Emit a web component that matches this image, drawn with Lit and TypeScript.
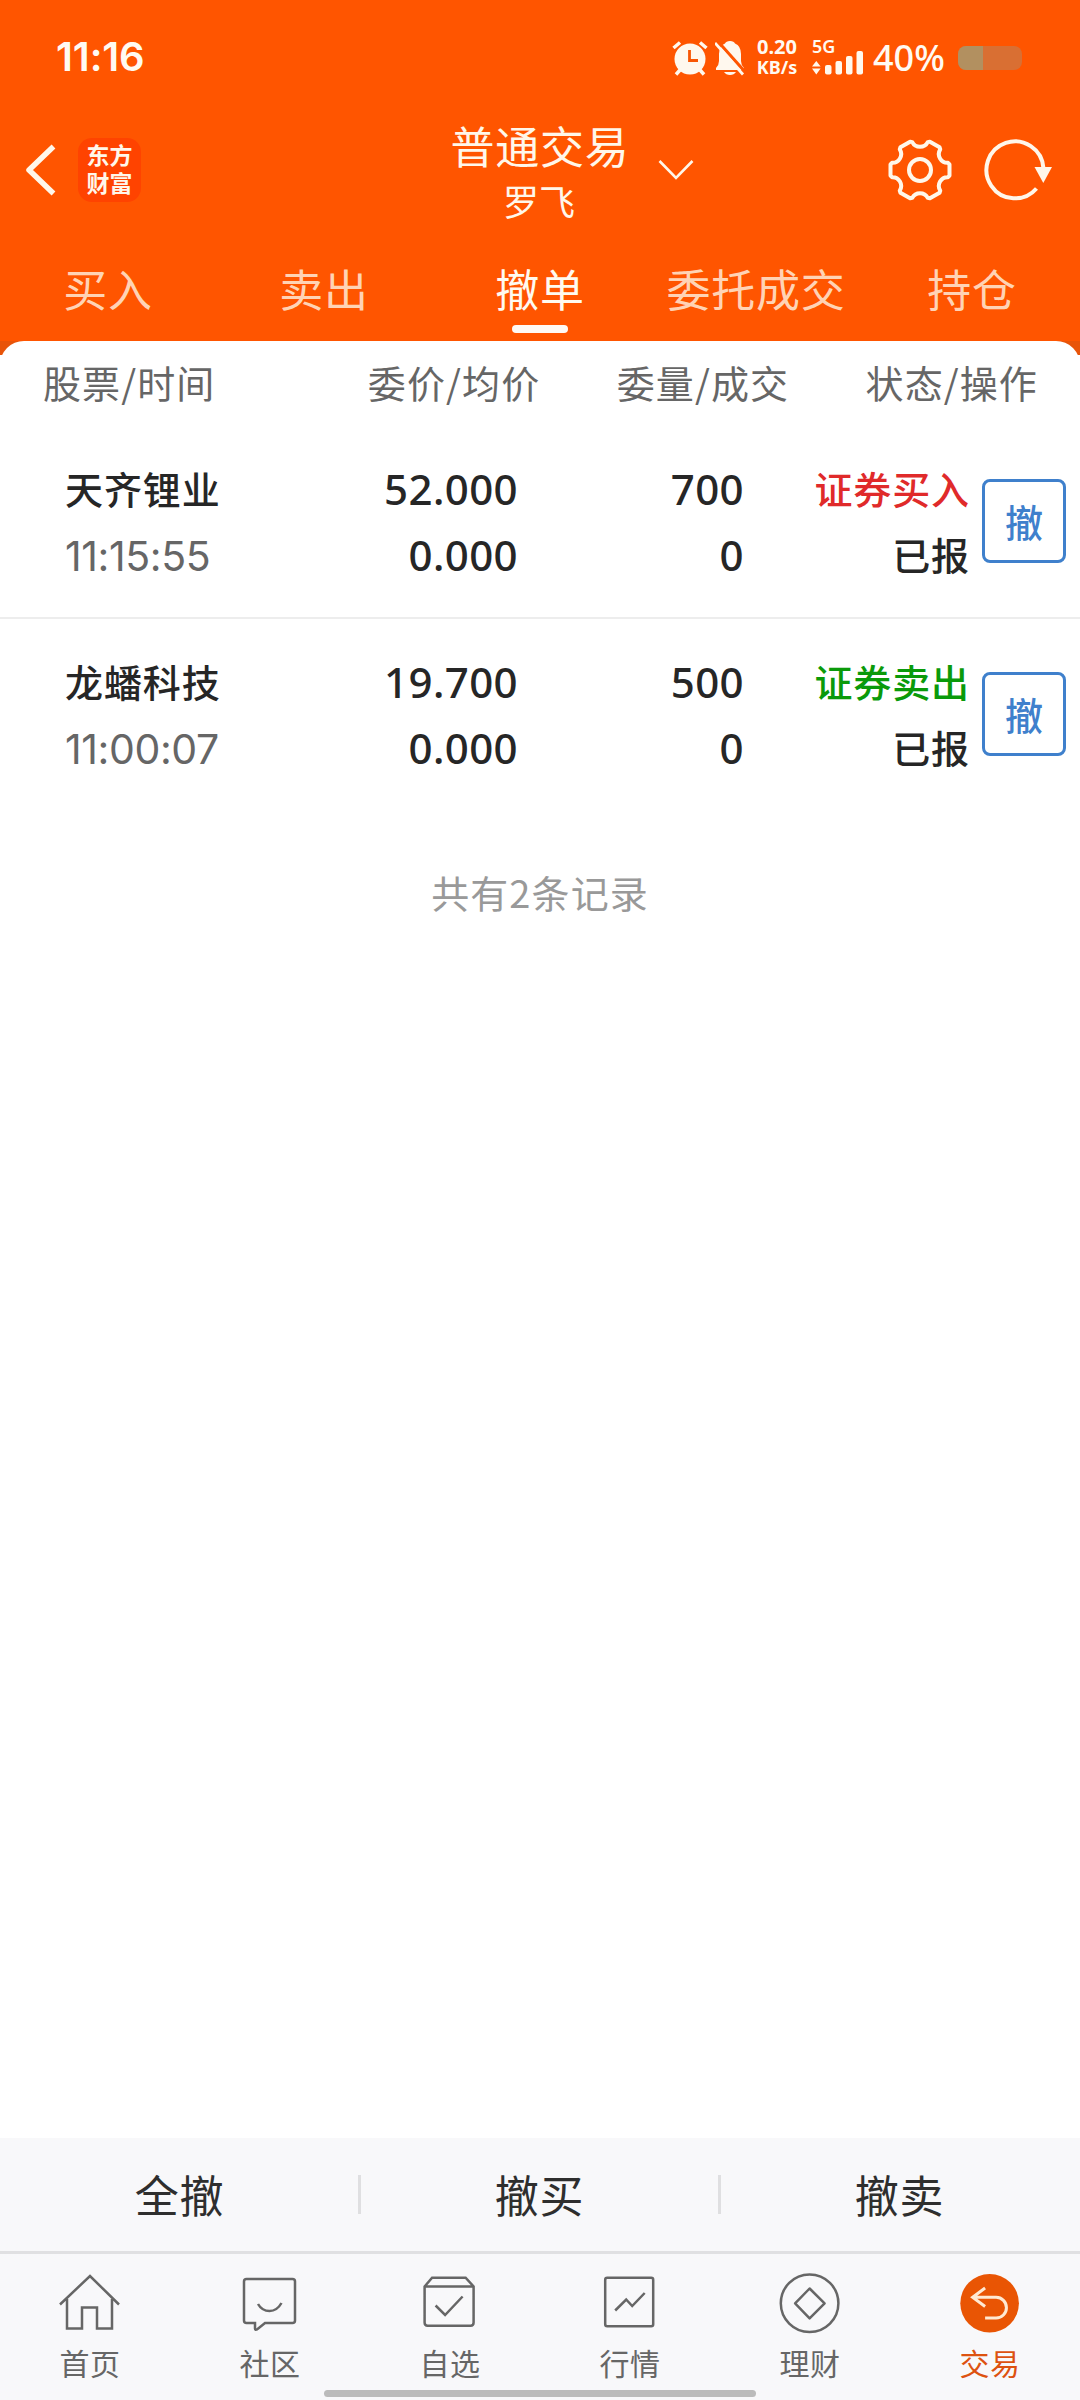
import { LitElement, html, css, svg } from "lit";
import { customElement, property } from "lit/decorators.js";
import { classMap } from "lit/directives/class-map.js";

interface Order {
  name: string;
  time: string;
  price: string;
  avg: string;
  qty: string;
  filled: string;
  side: string;
  buy: boolean;
  state: string;
}

const ORDERS: Order[] = [
  { name: "天齐锂业", time: "11:15:55", price: "52.000", avg: "0.000", qty: "700", filled: "0", side: "证券买入", buy: true, state: "已报" },
  { name: "龙蟠科技", time: "11:00:07", price: "19.700", avg: "0.000", qty: "500", filled: "0", side: "证券卖出", buy: false, state: "已报" },
];

const TABS = ["买入", "卖出", "撤单", "委托成交", "持仓"];

const NAV = [
  { label: "首页", box: "1 0 90 70", icon: svg`<path d="M16 36.500L46 8L75 36.500M23 31V60.500H38V39.500H53V60.500H68V31"/>` },
  { label: "社区", box: "1 0 90 70", icon: svg`<path d="M22.500 11H68.500Q71 11 71 13.500V52.500Q71 55 68.500 55H41L33 61.500Q31 62.500 31 60.500V55H22.500Q20 55 20 52.500V13.500Q20 11 22.500 11Z"/><path d="M34 36Q38 43 45.500 43T57.500 35"/>` },
  { label: "自选", box: "1.400 0 90 70", icon: svg`<path d="M21 18.500L28.500 9.700H62L70 18.500V54.500Q70 57.700 67 57.700H24Q21 57.700 21 54.500ZM21 18.500H70M32 37.500L41.500 47L59 28.500"/>` },
  { label: "行情", box: "0.800 0 90 70", icon: svg`<rect x="21" y="9.700" width="48" height="48.500" rx="2"/><path d="M31 42.500L42 31.500L48 38L60.500 25"/>` },
  { label: "理财", box: "0.400 0 90 70", icon: svg`<circle cx="45" cy="35.300" r="28.800"/><path stroke-linejoin="round" d="M45 20.500L60 35.300L45 50.300L30.500 35.300Z"/>` },
  { label: "交易", box: "0.400 0 90 70", icon: svg`<circle class="disc" cx="45" cy="35.300" r="29.300"/><path class="mark" d="M40.500 20L28 29.300L40.500 38.500M28 29.300H51.500A10.300 10.300 0 0 1 51.500 50H40.500"/>` },
];

/** Outline of a six-toothed gear centred on the origin. */
function gearPath(): string {
  const at = (x: number, y: number, deg: number) => {
    const a = (deg * Math.PI) / 180;
    return `${(x * Math.cos(a) - y * Math.sin(a)).toFixed(2)} ${(x * Math.sin(a) + y * Math.cos(a)).toFixed(2)}`;
  };
  let d = "";
  for (let k = 0; k < 6; k++) {
    const deg = k * 60;
    d += `${k ? "L" : "M"}${at(28, -7.2, deg)}L${at(29.5, -5.6, deg)}L${at(29.5, 5.6, deg)}L${at(28, 7.2, deg)}`;
    d += `C${at(21.6, 4.6, deg + 30 - 24)} ${at(21.6, -4.6, deg + 30 + 24)} ${at(28, -7.2, deg + 60)}`;
  }
  return d + "Z";
}

@customElement("status-bar")
class StatusBar extends LitElement {
  static styles = css`
    :host { display: block; }
    .bar { display: flex; align-items: center; height: 115px; box-sizing: border-box; padding: 0 58px 0 56px; color: #fffaf2; font-family: Inter, "Noto Sans", sans-serif; }
    .time { font-size: 40px; font-weight: 600; letter-spacing: -0.1px; flex: 1; padding-bottom: 2px; }
    svg { display: block; flex: none; }
    .bell { margin-left: 7px; }
    .speed { width: 50px; margin-left: 7px; text-align: center; font-family: "Noto Sans", sans-serif; font-weight: 700; font-size: 20px; line-height: 22px; white-space: nowrap; padding-bottom: 3px; }
    .unit { font-size: 18px; line-height: 19px; }
    .signal { display: flex; flex-direction: column; margin-left: 10px; width: 54px; height: 38px; }
    .gen { font: 600 18px/15px "Noto Sans", sans-serif; height: 11px; }
    .pct { font: 500 36px/44px "Noto Sans", sans-serif; margin-left: 7px; width: 85px; letter-spacing: 0; white-space: nowrap; }
    .battery { display: flex; width: 64px; height: 24px; border-radius: 8px; overflow: hidden; background: #d96f33; }
    .level { width: 25px; background: #b29060; }
  `;
  render() {
    return html`<div class="bar">
      <div class="time">11:16</div>
      <svg width="36" height="36" viewBox="0 0 36 36" fill="none" stroke="#fff8ee" stroke-width="3.500">
        <circle cx="18" cy="19" r="15.500" fill="#fff8ee" stroke="none"/>
        <path d="M1.500 8L8 2.500M34.500 8L28 2.500M8 30L4 34.500M28 30L32 34.500"/>
        <path d="M17.500 10V20.500H26" stroke="#f85604" stroke-width="2.800"/>
      </svg>
      <svg class="bell" width="30" height="36" viewBox="0 0 30 36">
        <path fill="#fff8ee" d="M15 1Q19 1 20 3.500Q26 6 26 14V21Q26 25 29 28V30H1V28Q4 25 4 21V14Q4 6 10 3.500Q11 1 15 1ZM9 32H21Q19 35 15 35T9 32Z"/>
        <path d="M3 1.500L31 33" stroke="#ff5500" stroke-width="3"/>
        <path d="M0 3L28 34.500" stroke="#fff8ee" stroke-width="2.800"/>
      </svg>
      <div class="speed"><div>0.20</div><div class="unit">KB/s</div></div>
      <div class="signal">
        <div class="gen">5G</div>
        <svg width="54" height="26" viewBox="0 0 54 26" fill="#fff8ee">
          <path d="M0 16.500L4.300 11L8.600 16.500ZM0 18.500H8.600L4.300 24.500Z"/>
          <rect x="13" y="15" width="6.500" height="9.500" rx="2"/>
          <rect x="23.500" y="11" width="6.500" height="13.500" rx="2"/>
          <rect x="34" y="6" width="6.500" height="18.500" rx="2"/>
          <rect x="44.500" y="1" width="6.500" height="23.500" rx="2"/>
        </svg>
      </div>
      <div class="pct">40%</div>
      <div class="battery"><div class="level"></div></div>
    </div>`;
  }
}

@customElement("title-bar")
class TitleBar extends LitElement {
  static styles = css`
    :host { display: block; }
    .bar { display: grid; grid-template-columns: 1fr 390px 1fr; align-items: center; height: 108px; color: #fff7ea; }
    .left, .right { display: flex; align-items: center; }
    .left { padding-left: 23px; }
    .right { justify-content: flex-end; padding-right: 27px; }
    svg { display: block; flex: none; fill: none; stroke: #fff7ea; }
    .logo { margin-left: 19px; width: 63px; height: 64px; box-sizing: border-box; padding-bottom: 5px; border-radius: 14px; background: #ff4300; display: flex; flex-direction: column; justify-content: center; align-items: center; font-weight: 700; font-size: 23px; line-height: 28px; }
    .mid { display: grid; grid-template-columns: 1fr auto 1fr; align-items: center; }
    .names { grid-column: 2; text-align: center; }
    .name { font-size: 44px; line-height: 60px; letter-spacing: 0.8px; }
    .user { font-size: 36px; line-height: 50px; margin-left: -2px; }
    .chev { margin-left: 28px; }
    .reload { margin-left: 31px; }
  `;
  render() {
    return html`<div class="bar">
      <div class="left">
        <svg width="36" height="56" viewBox="0 0 36 56"><path d="M30.500 4.500L6 28L30.500 51.500" stroke-width="5.500" stroke-linejoin="round"/></svg>
        <div class="logo"><span>东方</span><span>财富</span></div>
      </div>
      <div class="mid">
        <div class="names"><div class="name">普通交易</div><div class="user">罗飞</div></div>
        <svg class="chev" width="36" height="24" viewBox="0 0 36 24"><path d="M1.500 3L18 20L34.500 3" stroke-width="2.600"/></svg>
      </div>
      <div class="right">
        <svg width="64" height="64" viewBox="-32 -32 64 64" stroke-width="4"><path d=${gearPath()} stroke-linejoin="round"/><circle r="11"/></svg>
        <svg class="reload" width="70" height="64" viewBox="-32 -32 70 64" stroke-width="4"><path d="M28.400 -2A28.500 28.500 0 1 0 21.500 18.500"/><path d="M19.500 -3H37L28.300 13Z" fill="#fff7ea" stroke="none"/></svg>
      </div>
    </div>`;
  }
}

@customElement("tab-strip")
class TabStrip extends LitElement {
  @property({ type: Number }) active = 2;
  static styles = css`
    :host { display: block; }
    .tabs { display: grid; grid-template-columns: repeat(5, 1fr); height: 118px; }
    .tab { display: flex; flex-direction: column; align-items: center; padding-top: 35px; font-size: 44px; line-height: 60px; letter-spacing: 0.8px; color: #ffd3b5; white-space: nowrap; }
    .tab.on { color: #fffaf0; }
    .line { width: 56px; height: 8px; border-radius: 4px; background: #fffaf5; margin-top: 7px; }
  `;
  render() {
    return html`<div class="tabs">${TABS.map(
      (t, i) => html`<div class=${classMap({ tab: true, on: i === this.active })}><span>${t}</span>${i === this.active ? html`<div class="line"></div>` : null}</div>`
    )}</div>`;
  }
}

@customElement("order-row")
class OrderRow extends LitElement {
  @property({ attribute: false }) order!: Order;
  static styles = css`
    :host { display: block; }
    .row { display: grid; grid-template-columns: 251px 202px 226px 226px 96px; height: 193px; box-sizing: border-box; padding: 31px 14px 0 65px; color: #262626; font-size: 38px; font-weight: 500; }
    .cell { display: flex; flex-direction: column; align-items: flex-end; line-height: 66px; letter-spacing: 0.9px; white-space: nowrap; }
    .cell.first { align-items: flex-start; }
    .num { font-family: "Noto Sans", sans-serif; font-size: 42px; letter-spacing: 0.4px; font-weight: 500; padding-top: 1px; }
    .time { font-family: Inter, "Noto Sans", sans-serif; font-size: 41px; letter-spacing: -0.4px; margin-top: 2px; color: #666; font-weight: 400; }
    .buy { color: #e02a2a; }
    .sell { color: #0a9a0a; }
    .act { justify-self: end; margin-top: 24px; width: 84px; height: 84px; box-sizing: border-box; padding-bottom: 1px; border: 3px solid #3f80cc; border-radius: 8px; color: #3f80cc; display: flex; align-items: center; justify-content: center; line-height: 56px; }
  `;
  render() {
    const o = this.order;
    return html`<div class="row">
      <div class="cell first"><span>${o.name}</span><span class="time">${o.time}</span></div>
      <div class="cell num"><span>${o.price}</span><span>${o.avg}</span></div>
      <div class="cell num"><span>${o.qty}</span><span>${o.filled}</span></div>
      <div class="cell"><span class=${o.buy ? "buy" : "sell"}>${o.side}</span><span>${o.state}</span></div>
      <div class="act">撤</div>
    </div>`;
  }
}

@customElement("bottom-nav")
class BottomNav extends LitElement {
  static styles = css`
    :host { display: block; }
    .actions { display: grid; grid-template-columns: repeat(3, 1fr); height: 113px; align-items: center; background: #f8f8fa; border-bottom: 3px solid #e0e0e2; }
    .action { text-align: center; font-size: 44px; line-height: 39px; height: 39px; letter-spacing: 0.8px; color: #2e2e2e; border-left: 3px solid #dfdfe1; margin: 0 2px 0 -2px; }
    .action:first-child { border-left-color: transparent; }
    .nav { display: grid; grid-template-columns: repeat(6, 1fr); height: 136px; background: #f8f8fa; color: #666; }
    .item { display: flex; flex-direction: column; align-items: center; padding-top: 14px; }
    svg { display: block; fill: none; stroke: currentColor; stroke-width: 2.500; }
    .label { font-size: 30px; line-height: 44px; letter-spacing: 0.6px; margin-top: 2px; }
    .item.on { color: #dd5210; }
    .disc { fill: #e95504; stroke: none; }
    .mark { stroke: #ffe9d2; stroke-width: 3; }
    .home { height: 10px; display: flex; justify-content: center; background: #f8f8fa; }
    .pill { width: 432px; height: 7px; border-radius: 4px; background: #bbb; }
  `;
  render() {
    return html`
      <div class="actions">${["全撤", "撤买", "撤卖"].map((a) => html`<div class="action">${a}</div>`)}</div>
      <div class="nav">${NAV.map(
        (n, i) => html`<div class=${classMap({ item: true, on: i === 5 })}>
          <svg width="90" height="70" viewBox=${n.box}>${n.icon}</svg>
          <div class="label">${n.label}</div>
        </div>`
      )}</div>
      <div class="home"><div class="pill"></div></div>`;
  }
}

@customElement("app-root")
class AppRoot extends LitElement {
  static styles = css`
    :host { display: flex; flex-direction: column; width: 1080px; height: 2400px; background: #fff; overflow: hidden; font-family: "Noto Sans CJK SC", sans-serif; }
    .top { background: #ff5500; height: 341px; flex: none; }
    .backing { flex: 1; background: linear-gradient(#e85409 14px, #fff 14px); }
    .panel { background: #fff; border-radius: 24px 24px 0 0; height: 100%; }
    .head { display: flex; justify-content: space-between; box-sizing: border-box; height: 83px; padding: 13px 42px 0 43px; font-size: 38px; line-height: 56px; letter-spacing: 1.1px; color: #666; white-space: nowrap; }
    .head span:nth-child(2) { margin-left: 76px; }
    .rule { height: 2px; background: #ededed; margin-bottom: -2px; }
    .total { text-align: center; font-size: 38px; line-height: 56px; letter-spacing: 1.1px; color: #999; margin-top: 54px; }
  `;
  render() {
    return html`
      <div class="top"><status-bar></status-bar><title-bar></title-bar><tab-strip></tab-strip></div>
      <div class="backing"><div class="panel">
        <div class="head"><span>股票/时间</span><span>委价/均价</span><span>委量/成交</span><span>状态/操作</span></div>
        <order-row .order=${ORDERS[0]}></order-row>
        <div class="rule"></div>
        <order-row .order=${ORDERS[1]}></order-row>
        <div class="total">共有2条记录</div>
      </div></div>
      <bottom-nav></bottom-nav>`;
  }
}
